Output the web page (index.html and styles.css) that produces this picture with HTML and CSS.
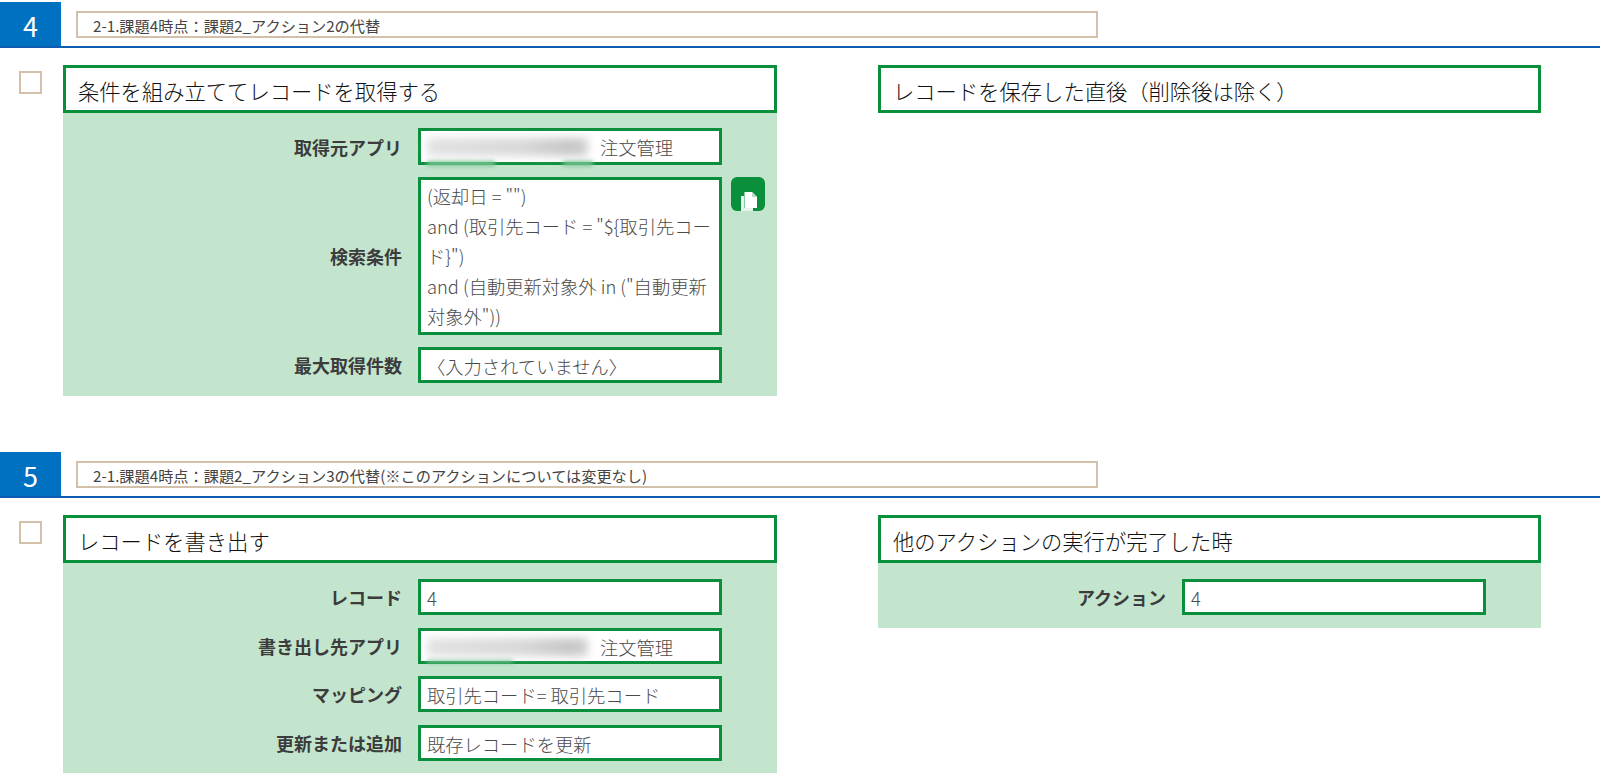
FILE: index.html
```html
<!DOCTYPE html>
<html lang="ja">
<head>
<meta charset="utf-8">
<title>アクション</title>
<link rel="stylesheet" href="styles.css">
</head>
<body>
<section class="step step-first">
  <header class="step-head">
    <div class="step-no">4</div>
    <div class="step-title">2-1.課題4時点：課題2_アクション2の代替</div>
  </header>
  <div class="step-main">
    <div class="check"></div>
    <div class="card card-action">
      <h2 class="card-head">条件を組み立ててレコードを取得する</h2>
      <div class="card-body">
        <div class="row">
          <div class="label">取得元アプリ</div>
          <div class="field field-app"><span class="blur"></span><span class="smudge smudge-a"></span><span class="smudge smudge-b"></span><span class="app-name">注文管理</span></div>
        </div>
        <div class="row">
          <div class="label">検索条件</div>
          <div class="field field-multi">(返却日 = "")<br>and (取引先コード = "${取引先コード}")<br>and (自動更新対象外 in ("自動更新対象外"))</div>
          <div class="copy">
            <svg width="34" height="34" viewBox="0 0 34 34"><path class="doc-back" d="M10 19h3v12h9v3H10z"/><path class="doc" d="M13.5 15h7.5l5 5v11H13.5z"/><path class="doc-fold" d="M21 15v5h5z"/></svg>
          </div>
        </div>
        <div class="row">
          <div class="label">最大取得件数</div>
          <div class="field field-empty">〈入力されていません〉</div>
        </div>
      </div>
    </div>
    <div class="card card-trigger">
      <h2 class="card-head">レコードを保存した直後（削除後は除く）</h2>
    </div>
  </div>
</section>

<section class="step step-second">
  <header class="step-head">
    <div class="step-no">5</div>
    <div class="step-title">2-1.課題4時点：課題2_アクション3の代替(※このアクションについては変更なし)</div>
  </header>
  <div class="step-main">
    <div class="check"></div>
    <div class="card card-action">
      <h2 class="card-head">レコードを書き出す</h2>
      <div class="card-body">
        <div class="row">
          <div class="label">レコード</div>
          <div class="field">4</div>
        </div>
        <div class="row">
          <div class="label">書き出し先アプリ</div>
          <div class="field field-app"><span class="blur"></span><span class="smudge smudge-c"></span><span class="app-name">注文管理</span></div>
        </div>
        <div class="row">
          <div class="label">マッピング</div>
          <div class="field">取引先コード= 取引先コード</div>
        </div>
        <div class="row">
          <div class="label">更新または追加</div>
          <div class="field">既存レコードを更新</div>
        </div>
      </div>
    </div>
    <div class="card card-trigger">
      <h2 class="card-head">他のアクションの実行が完了した時</h2>
      <div class="card-body">
        <div class="row">
          <div class="label">アクション</div>
          <div class="field">4</div>
        </div>
      </div>
    </div>
  </div>
</section>
</body>
</html>
```

FILE: styles.css
```css
* { box-sizing: border-box; }
html, body { margin: 0; padding: 0; }
body {
  width: 1600px;
  height: 780px;
  overflow: hidden;
  background: #fff;
  color: #333;
  font-family: "Noto Sans CJK JP", "Noto Sans", sans-serif;
}
.step-first { padding-top: 2px; }
.step-second { margin-top: 56px; }

.step-head {
  display: flex;
  align-items: flex-start;
  height: 46px;
  border-bottom: 2px solid #0e5bb0;
}
.step-no {
  width: 61px;
  height: 44px;
  background: #0070c0;
  color: #fff;
  font-size: 27px;
  line-height: 48px;
  text-align: center;
}
.step-title {
  width: 1022px;
  height: 27px;
  margin: 9px 0 0 15px;
  padding-left: 15px;
  border: 2px solid #d3c0aa;
  color: #444;
  font-size: 15.2px;
  line-height: 25px;
  white-space: nowrap;
}

.step-main {
  display: flex;
  align-items: flex-start;
  padding: 17px 0 0 19px;
}
.check {
  width: 23px;
  height: 23px;
  margin: 6px 21px 0 0;
  border: 2px solid #d3c0aa;
}
.card-action { width: 714px; }
.card-trigger { width: 663px; margin-left: 101px; }

.card-head {
  height: 48px;
  margin: 0;
  padding-left: 12px;
  border: 3px solid #0a8f3c;
  background: #fff;
  color: #111;
  font-size: 21.3px;
  font-weight: 300;
  line-height: 45px;
  white-space: nowrap;
}
.card-body {
  display: flex;
  flex-direction: column;
  gap: 12px;
  padding: 15px 0 13px;
  background: #c3e5cd;
}
.step-second .card-body {
  gap: 12.5px;
  padding: 16px 0 12.5px;
}
.row {
  display: flex;
  align-items: center;
  gap: 16px;
}
.label {
  flex: none;
  width: 339px;
  color: #3c3c3c;
  font-size: 18px;
  font-weight: 700;
  text-align: right;
  white-space: nowrap;
}
.card-trigger .label { width: 288px; }

.field {
  position: relative;
  width: 304px;
  height: 37px;
  padding-left: 6px;
  border: 3px solid #0a8f3c;
  background: #fff;
  color: #4a4a4a;
  font-size: 18.3px;
  font-weight: 300;
  line-height: 33px;
  white-space: nowrap;
  overflow: visible;
}
.step-second .field { height: 36px; }
.field-multi {
  height: 158px;
  line-height: 30px;
  padding-top: 1px;
  padding-right: 4px;
  white-space: normal;
}
.field-empty { height: 36px; }
.field-app { display: flex; }
.app-name { margin-left: auto; padding-right: 46px; }

.blur {
  position: absolute;
  left: 6px;
  top: 7px;
  width: 161px;
  height: 18px;
  background: linear-gradient(90deg, #e2e2e2, #d8d8d8 60%, #c6c6c6 90%, #d4d4d4);
  filter: blur(4px);
}
.smudge {
  position: absolute;
  bottom: -4px;
  height: 5px;
  background: #7dc596;
  filter: blur(2px);
}
.smudge-a { left: 6px; width: 68px; }
.smudge-b { left: 142px; width: 30px; }
.smudge-c { left: 6px; width: 86px; bottom: -2px; height: 3px; }

.copy {
  align-self: flex-start;
  width: 34px;
  height: 34px;
  margin-left: -7px;
  border-radius: 6px;
  background: #0a8f3c;
}
.copy svg { display: block; }
.doc { fill: #fff; }
.doc-back { fill: #fff; opacity: .9; }
.doc-fold { fill: #b9dcc5; }
```
